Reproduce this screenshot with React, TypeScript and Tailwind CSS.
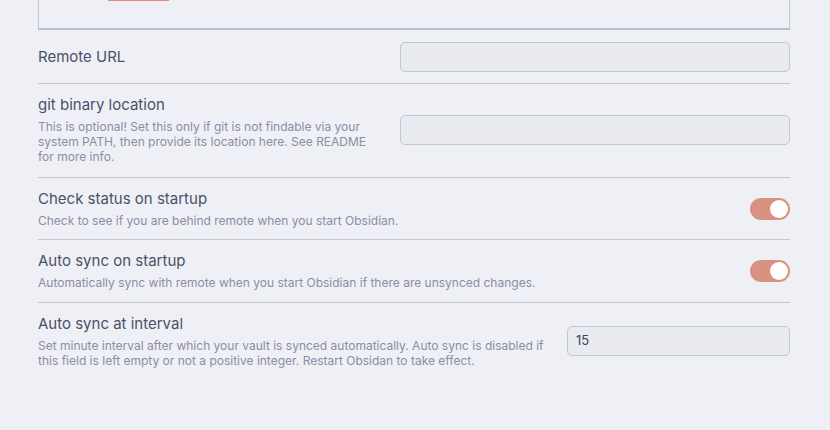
import type { ReactNode } from "react";

function Toggle() {
  return (
    <div className="flex h-[22px] w-[40px] shrink-0 items-center justify-end rounded-full bg-[#d99282] pr-[2px]">
      <div className="h-[18px] w-[18px] rounded-full bg-white" />
    </div>
  );
}

function TextInput({ value, width }: { value?: string; width: string }) {
  return (
    <div
      className={`flex h-[30px] shrink-0 items-center rounded-[5px] border border-[#c2c5d2] bg-[#e9ebf0] px-2 text-[13px] text-[#3f4358] ${width}`}
    >
      {value}
    </div>
  );
}

function SettingRow({
  title,
  desc,
  control,
  pad,
  last,
}: {
  title: string;
  desc?: ReactNode;
  control: ReactNode;
  pad: string;
  last?: boolean;
}) {
  return (
    <div
      className={`flex items-center ${pad} ${last ? "" : "border-b border-[#c4c6d2]"}`}
    >
      <div className="mr-4 flex-1">
        <div className="text-[15px] leading-[20px] text-[#4b5068]">{title}</div>
        {desc && (
          <div className="mt-[4px] text-[12px] leading-[15px] text-[#8a8ea3]">
            {desc}
          </div>
        )}
      </div>
      {control}
    </div>
  );
}

export default function App() {
  return (
    <div
      className="h-[430px] w-[830px] overflow-hidden bg-[#eff0f5] pl-[38px] pr-[40px]"
      style={{ fontFamily: "Inter, 'Noto Sans', sans-serif" }}
    >
      <div className="h-[30px] border-x border-b-2 border-x-[#c4c6d2] border-b-[#b9bdc9] pl-[69px]">
        <div className="h-px w-[61px] bg-[#e38d78]" />
      </div>

      <SettingRow
        title="Remote URL"
        pad="pt-3 pb-[11px]"
        control={<TextInput width="w-[390px]" />}
      />
      <SettingRow
        title="git binary location"
        pad="pt-[11px] pb-[13px]"
        desc={
          <div className="w-[340px]">
            This is optional! Set this only if git is not findable via your
            system PATH, then provide its location here. See README for more
            info.
          </div>
        }
        control={<TextInput width="w-[390px]" />}
      />
      <SettingRow
        title="Check status on startup"
        pad="pt-[11px] pb-[11px]"
        desc="Check to see if you are behind remote when you start Obsidian."
        control={<Toggle />}
      />
      <SettingRow
        title="Auto sync on startup"
        pad="pt-[11px] pb-3"
        desc="Automatically sync with remote when you start Obsidian if there are unsynced changes."
        control={<Toggle />}
      />
      <SettingRow
        title="Auto sync at interval"
        pad="pt-[11px] pb-3"
        desc="Set minute interval after which your vault is synced automatically. Auto sync is disabled if this field is left empty or not a positive integer. Restart Obsidan to take effect."
        control={<TextInput value="15" width="w-[223px]" />}
        last
      />
    </div>
  );
}
